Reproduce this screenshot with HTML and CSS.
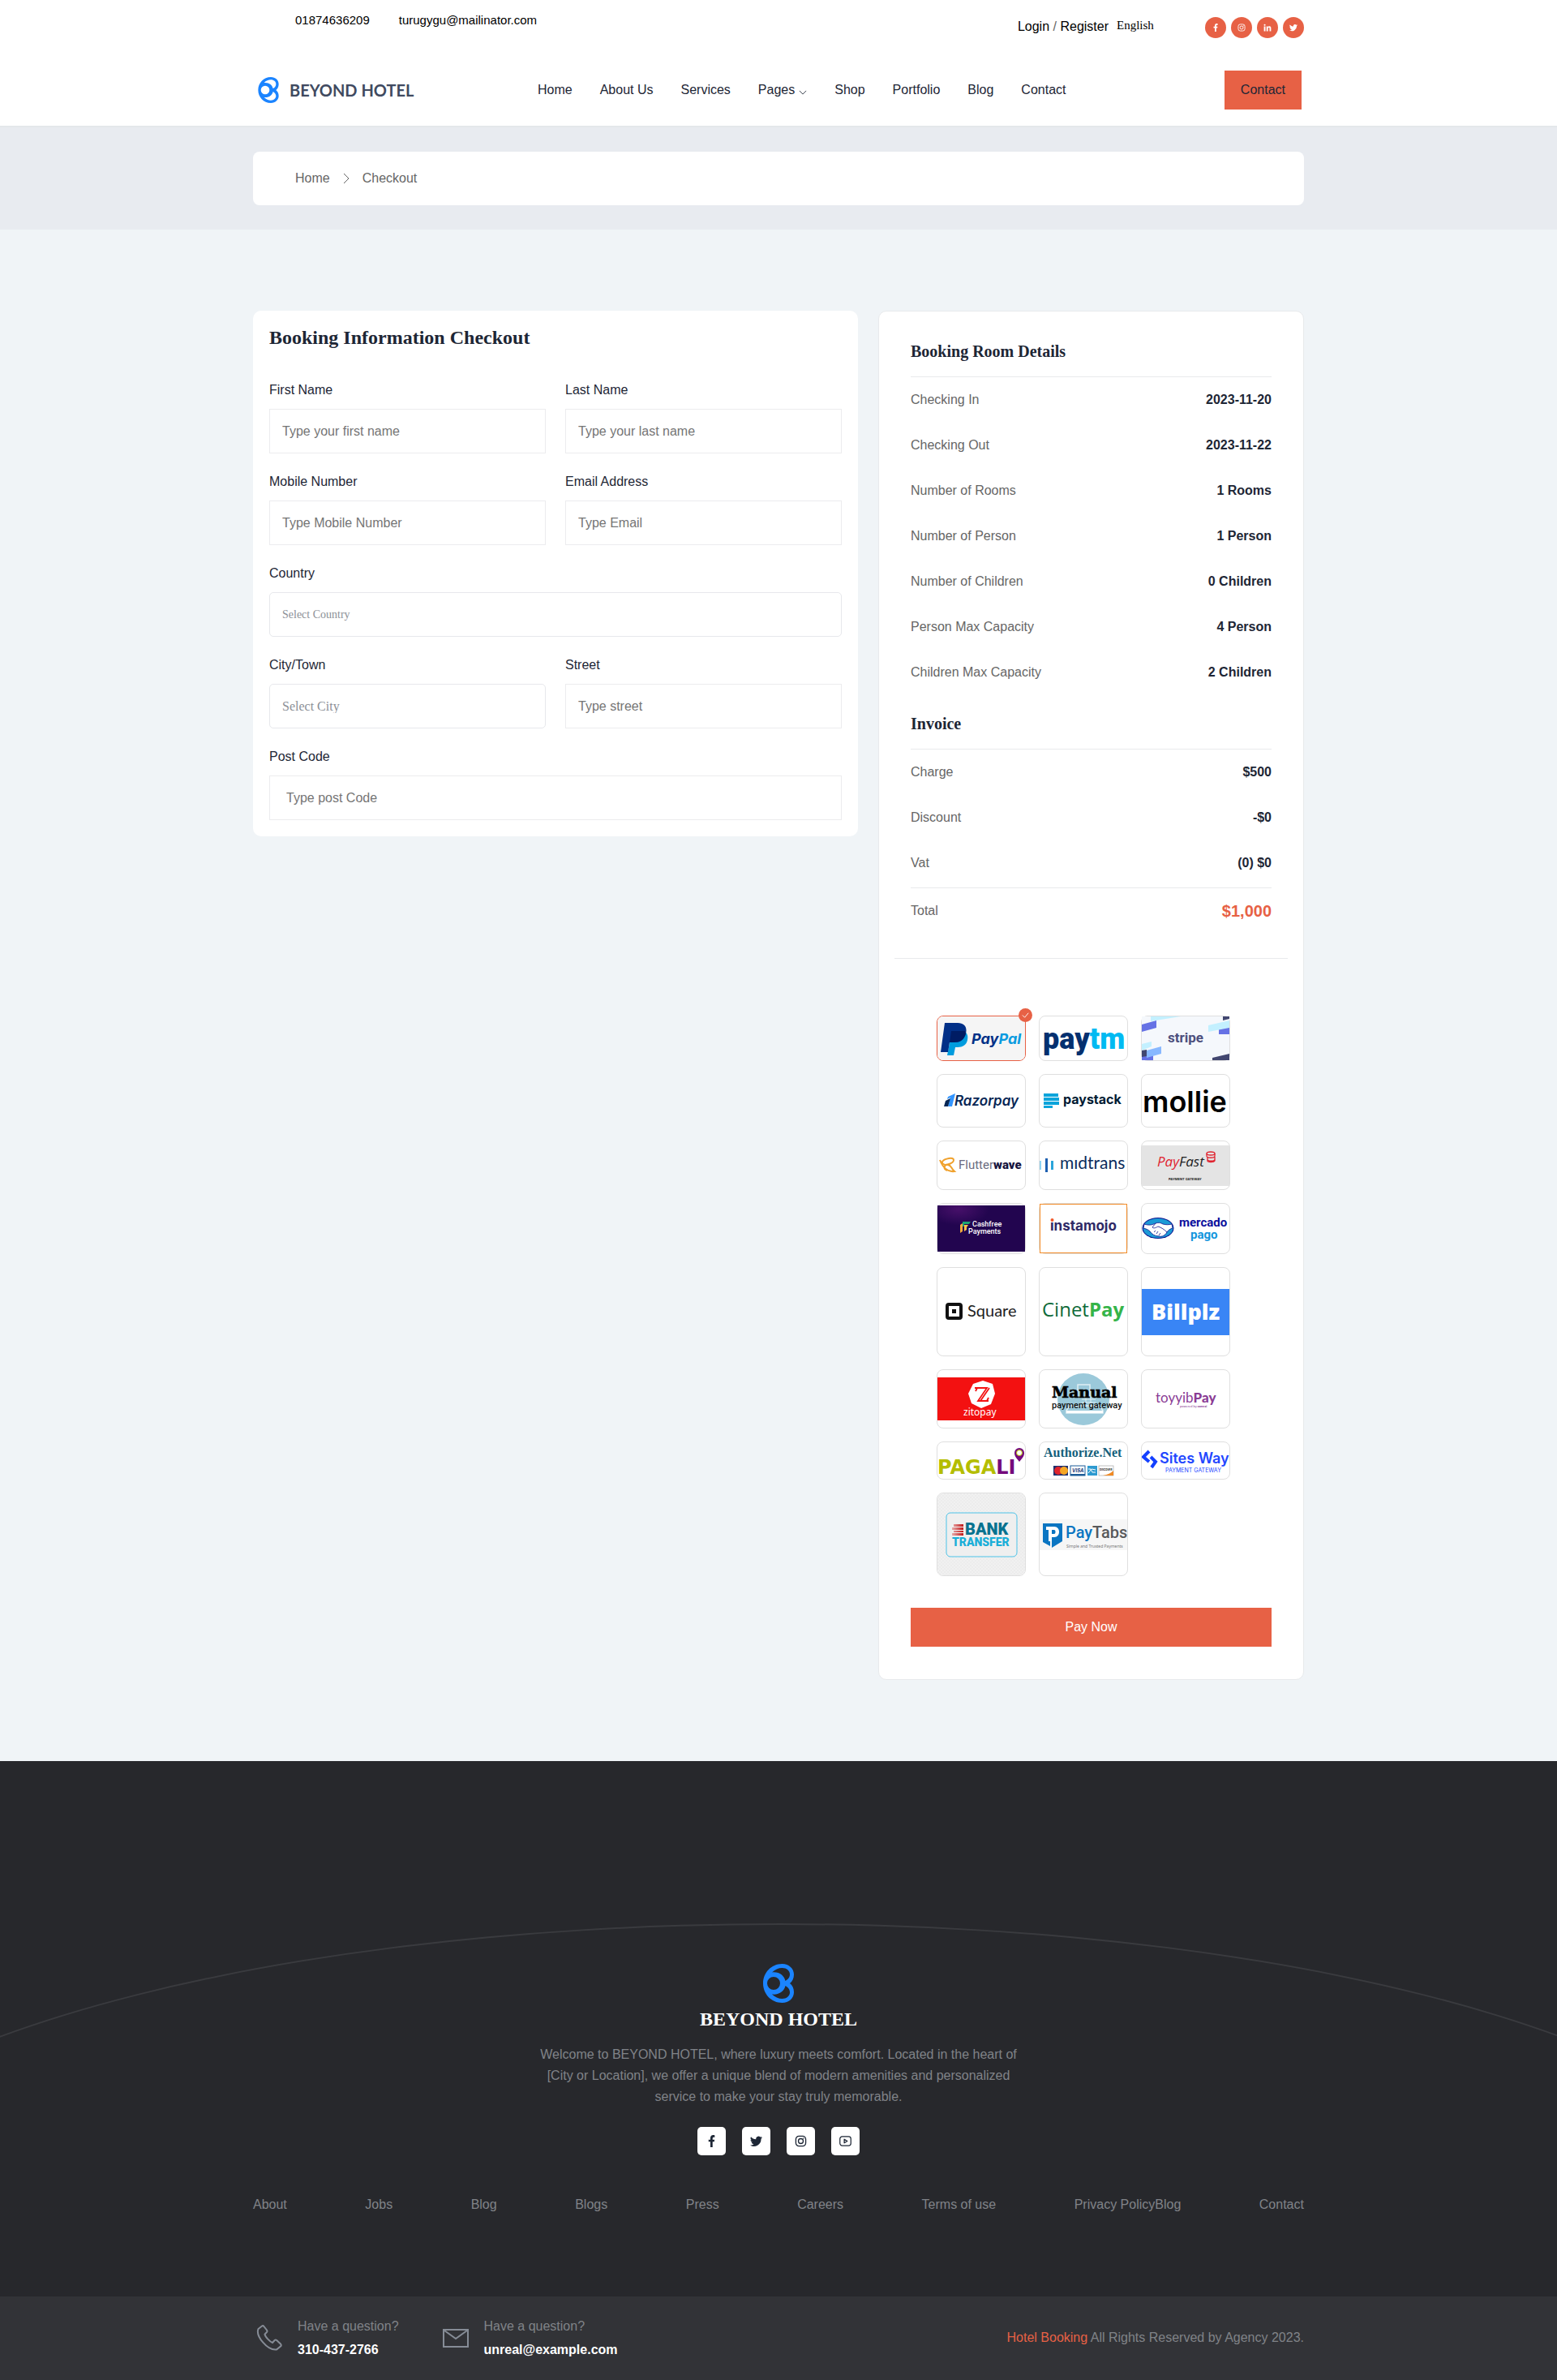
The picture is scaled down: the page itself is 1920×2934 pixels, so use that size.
FILE: index.html
```html
<!DOCTYPE html>
<html lang="en">
<head>
  <meta charset="UTF-8">
  <meta name="viewport" content="width=device-width, initial-scale=1.0">
  <title>Checkout</title>
  <link rel="stylesheet" href="styles.css">
</head>
<body>
  <!-- shared icons -->
  <svg class="sprite" aria-hidden="true">
    <symbol id="logo" viewBox="0 0 38 48">
      <path fill-rule="evenodd" d="M23.500 0C32 0 38 6 38 13C38 18 36 21.500 33 24C36 26.500 38 30 38 35C38 42 32 48 23.500 48C10 48 0 37 0 24C0 11 10 0 23.500 0ZM13 16a8 8 0 1 0 0 16a8 8 0 1 0 0-16ZM11 10.500C14.500 7 19 5 23.500 5C29 5 33 8.500 33 13C33 16.500 30.500 19.500 27.500 21C26 14.500 20 9.500 11 10.500ZM11 37.500C14.500 41 19 43 23.500 43C29 43 33 39.500 33 35C33 31.500 30.500 28.500 27.500 27C26 33.500 20 38.500 11 37.500Z"/>
    </symbol>
    <symbol id="facebook" viewBox="0 0 16 16">
      <path d="M9.300 16V8.800h2.200l.4-2.700H9.300V4.600c0-.9.400-1.600 1.600-1.600h1.200V.400C11.600.200 11 0 10.200 0 7.700 0 6.400 1.500 6.400 4v2.100H4v2.700h2.400V16z"/>
    </symbol>
    <symbol id="twitter" viewBox="0 0 16 16">
      <path d="M16 3.200c-.6.300-1.200.4-1.900.5.700-.4 1.200-1 1.400-1.800-.6.400-1.300.6-2.100.8a3.300 3.300 0 0 0-5.600 3C5.100 5.600 2.700 4.300 1.100 2.400a3.300 3.300 0 0 0 1 4.400c-.5 0-1-.2-1.500-.4 0 1.600 1.100 2.900 2.600 3.200-.5.100-1 .1-1.500.1.400 1.300 1.600 2.200 3.100 2.300A6.600 6.600 0 0 1 0 13.300 9.300 9.300 0 0 0 14.400 5c.6-.5 1.200-1.100 1.600-1.800z"/>
    </symbol>
    <symbol id="instagram" viewBox="0 0 16 16">
      <g fill="none" stroke="currentColor" stroke-width="1.400">
        <rect x="1.500" y="1.500" width="13" height="13" rx="4"/>
        <circle cx="8" cy="8" r="3.200"/>
      </g>
      <circle cx="11.700" cy="4.300" r=".8"/>
    </symbol>
    <symbol id="linkedin" viewBox="0 0 16 16">
      <path d="M1 5.500h3V15H1zM2.500 1a1.700 1.700 0 1 1 0 3.400 1.700 1.700 0 0 1 0-3.400zM6 5.500h2.900v1.300c.5-.9 1.500-1.500 2.800-1.500 2.600 0 3.300 1.600 3.300 4V15h-3v-5c0-1.200-.2-2.200-1.400-2.200S9 8.700 9 10v5H6z"/>
    </symbol>
    <symbol id="youtube" viewBox="0 0 16 16">
      <g fill="none" stroke="currentColor" stroke-width="1.300" stroke-linejoin="round">
        <rect x=".8" y="2" width="14.400" height="12" rx="3"/>
        <path d="M6.500 5.500v5L10.500 8z"/>
      </g>
    </symbol>
  </svg>

  <header class="header">
    <div class="container topbar">
      <div class="topbar-left">
        <a href="#">01874636209</a>
        <a href="#">turugygu@mailinator.com</a>
      </div>
      <div class="topbar-right">
        <div class="login"><a href="#">Login</a> / <a href="#">Register</a></div>
        <select class="language" aria-label="Language">
          <option>English</option>
        </select>
        <div class="social">
          <a href="#" aria-label="Facebook"><svg><use href="#facebook"/></svg></a>
          <a href="#" aria-label="Instagram"><svg><use href="#instagram"/></svg></a>
          <a href="#" aria-label="LinkedIn"><svg><use href="#linkedin"/></svg></a>
          <a href="#" aria-label="Twitter"><svg><use href="#twitter"/></svg></a>
        </div>
      </div>
    </div>
    <div class="container navbar">
      <a href="#" class="logo"><svg><use href="#logo"/></svg><span>BEYOND HOTEL</span></a>
      <nav class="menu">
        <a href="#">Home</a>
        <a href="#">About Us</a>
        <a href="#">Services</a>
        <a href="#">Pages <svg viewBox="0 0 12 8"><path d="M1 1.500l5 5 5-5"/></svg></a>
        <a href="#">Shop</a>
        <a href="#">Portfolio</a>
        <a href="#">Blog</a>
        <a href="#">Contact</a>
      </nav>
      <a href="#" class="btn btn-contact">Contact</a>
    </div>
  </header>

  <div class="breadcrumb-area">
    <div class="container">
      <div class="breadcrumb">
        <a href="#">Home</a>
        <svg viewBox="0 0 8 14"><path d="M1 1l6 6-6 6"/></svg>
        <span>Checkout</span>
      </div>
    </div>
  </div>

  <main class="container checkout">
    <form class="card booking-form" id="booking">
      <h1>Booking Information Checkout</h1>
      <div class="fields">
        <div class="field">
          <label for="first-name">First Name</label>
          <input type="text" id="first-name" placeholder="Type your first name">
        </div>
        <div class="field">
          <label for="last-name">Last Name</label>
          <input type="text" id="last-name" placeholder="Type your last name">
        </div>
        <div class="field">
          <label for="mobile">Mobile Number</label>
          <input type="tel" id="mobile" placeholder="Type Mobile Number">
        </div>
        <div class="field">
          <label for="email">Email Address</label>
          <input type="email" id="email" placeholder="Type Email">
        </div>
        <div class="field full">
          <label for="country">Country</label>
          <select id="country" class="small"><option>Select Country</option></select>
        </div>
        <div class="field">
          <label for="city">City/Town</label>
          <select id="city"><option>Select City</option></select>
        </div>
        <div class="field">
          <label for="street">Street</label>
          <input type="text" id="street" placeholder="Type street">
        </div>
        <div class="field full">
          <label for="post-code">Post Code</label>
          <input type="text" id="post-code" class="post-code" placeholder="Type post Code">
        </div>
      </div>
    </form>

    <aside class="card summary">
      <div class="details">
        <h2>Booking Room Details</h2>
        <table>
          <tr><th scope="row">Checking In</th><td>2023-11-20</td></tr>
          <tr><th scope="row">Checking Out</th><td>2023-11-22</td></tr>
          <tr><th scope="row">Number of Rooms</th><td>1 Rooms</td></tr>
          <tr><th scope="row">Number of Person</th><td>1 Person</td></tr>
          <tr><th scope="row">Number of Children</th><td>0 Children</td></tr>
          <tr><th scope="row">Person Max Capacity</th><td>4 Person</td></tr>
          <tr><th scope="row">Children Max Capacity</th><td>2 Children</td></tr>
        </table>
        <h2 class="invoice-title">Invoice</h2>
        <table>
          <tr><th scope="row">Charge</th><td>$500</td></tr>
          <tr><th scope="row">Discount</th><td>-$0</td></tr>
          <tr><th scope="row">Vat</th><td>(0) $0</td></tr>
        </table>
        <table class="total">
          <tr><th scope="row">Total</th><td>$1,000</td></tr>
        </table>
      </div>

      <div class="payment">
        <div class="gateways">
          <label class="gateway">
            <input type="radio" name="gateway" form="booking" checked aria-label="PayPal">
            <svg viewBox="0 0 108 54">
              <rect width="108" height="54" rx="7" fill="#f5f5f5"/>
              <path d="M18 18h14c5 2 6 6 5 11-1 6-6 9-12 9h-3l-2 10h-8z" fill="#009cde"/>
              <path d="M9 8h16c8 0 12 5 10 13-2 8-7 11-15 11h-5l-2 12H4z" fill="#012f87"/>
              <path d="M17 18h17l1 3c-2 8-7 11-15 11h-5z" fill="#001c64"/>
              <text x="42" y="34" font-family="Inter" font-size="18" font-weight="700" font-style="italic" fill="#003087">Pay<tspan fill="#0a9be0">Pal</tspan></text>
            </svg>
            <span class="check"><svg viewBox="0 0 12 12"><path d="M2 6l3 3 5-6"/></svg></span>
          </label>
          <label class="gateway">
            <input type="radio" name="gateway" form="booking" aria-label="Paytm">
            <svg viewBox="0 0 108 54">
              <text x="4" y="40" font-family="Roboto" font-size="36" font-weight="900" fill="#04306f">pay<tspan fill="#00baf2">tm</tspan></text>
            </svg>
          </label>
          <label class="gateway">
            <input type="radio" name="gateway" form="booking" aria-label="Stripe">
            <svg viewBox="0 0 108 54">
              <rect width="108" height="54" fill="#f5f8fc"/>
              <path d="M0 10l18-5v9L0 19zM95 16l13-3v9H95zM0 49l14-1v6H0z" fill="#6672e5"/>
              <path d="M11 2V0h37L11 6zM82 11l26-6v9l-26 5zM0 34l12-3v6L0 42z" fill="#c3f0ff"/>
              <path d="M6 42l18-5v9L6 51z" fill="#88b8ff"/>
              <path d="M100 0h8v3l-8 2zM87 51l21-5v8H87zM0 42l6-1v8l-6 1z" fill="#424770"/>
              <text x="32" y="32" font-family="Roboto" font-size="17" font-weight="700" fill="#4c4f7d">stripe</text>
            </svg>
          </label>

          <label class="gateway">
            <input type="radio" name="gateway" form="booking" aria-label="Razorpay">
            <svg viewBox="0 0 108 64">
              <path d="M13 27l9-4-4 16h-5l3-11-4 2z" fill="#3395ff"/>
              <path d="M10 32l6-3-3 10H8z" fill="#072654"/>
              <text x="21" y="38" font-family="Inter" font-size="17" font-weight="600" font-style="italic" fill="#072654">Razorpay</text>
            </svg>
          </label>
          <label class="gateway">
            <input type="radio" name="gateway" form="booking" aria-label="Paystack">
            <svg viewBox="0 0 108 64">
              <path d="M5 23h18v4H5zM5 28h19v4H5zM5 33h19v4H5zM5 38h11v3H5z" fill="#0ba4db"/>
              <text x="29" y="36" font-family="Inter" font-size="16" font-weight="700" fill="#011b33">paystack</text>
            </svg>
          </label>
          <label class="gateway">
            <input type="radio" name="gateway" form="booking" aria-label="Mollie">
            <svg viewBox="0 0 108 64">
              <text x="1" y="46" font-family="Inter" font-size="36" font-weight="600" fill="#000">mollie</text>
            </svg>
          </label>

          <label class="gateway">
            <input type="radio" name="gateway" form="booking" aria-label="Flutterwave">
            <svg viewBox="0 0 108 59">
              <g fill="none" stroke="#f0a12c" stroke-width="2">
                <path d="M3 23c4 10 10 15 18 14-5-4-3-7-8-8-4-1-7 5-1 7"/>
                <path d="M6 25c3-4 14-6 14-2s-8 6-10 6-5-2-4-4z"/>
              </g>
              <text x="26" y="34" font-family="Roboto" font-size="15" fill="#6c6c80">Flutter<tspan font-weight="900" fill="#17153f">wave</tspan></text>
            </svg>
          </label>
          <label class="gateway">
            <input type="radio" name="gateway" form="booking" aria-label="Midtrans">
            <svg viewBox="0 0 108 59">
              <path d="M0 24h2v11H0z" fill="#8fd4f2"/>
              <path d="M7 21h3v17H7z" fill="#1d5fb0"/>
              <path d="M14 24h3v11h-3z" fill="#2aa5da"/>
              <text x="25" y="34" font-family="Lato" font-size="21" fill="#0c2d5c">mıdtrans</text>
            </svg>
          </label>
          <label class="gateway">
            <input type="radio" name="gateway" form="booking" aria-label="PayFast">
            <svg viewBox="0 0 108 59">
              <rect y="5" width="108" height="50" fill="#e4e4e4"/>
              <text x="19" y="31" font-family="Open Sans" font-size="17" font-style="italic" fill="#e02430">Pay<tspan fill="#222">Fast</tspan></text>
              <g fill="none" stroke="#e02430" stroke-width="1.300">
                <ellipse cx="85" cy="15" rx="5" ry="2"/>
                <path d="M80 15v3c0 3 10 3 10 0v-3M81 19v3c0 3 9 3 9 0v-3M81 22v2c0 2 8 2 9 0v-2"/>
              </g>
              <text x="33" y="48" font-family="Inter" font-size="4" font-weight="700" fill="#222">PAYMENT GATEWAY</text>
            </svg>
          </label>

          <label class="gateway">
            <input type="radio" name="gateway" form="booking" aria-label="Cashfree Payments">
            <svg viewBox="0 0 108 61">
              <defs>
                <radialGradient id="glow" cx=".24" cy=".08" r=".35">
                  <stop offset="0" stop-color="#47106a"/>
                  <stop offset="1" stop-color="#22054f"/>
                </radialGradient>
              </defs>
              <rect y="2" width="108" height="57" fill="url(#glow)"/>
              <path d="M28 26l3-2v10l-3 2z" fill="#f3a93c"/>
              <path d="M31 22h10l-2 3h-6v3h-2z" fill="#1ba672"/>
              <path d="M33 26h5l-2 3v3l-3 2z" fill="#f6c14b"/>
              <g font-family="Roboto" font-size="9" font-weight="500" fill="#fff">
                <text x="43" y="28">Cashfree</text>
                <text x="38" y="37">Payments</text>
              </g>
            </svg>
          </label>
          <label class="gateway">
            <input type="radio" name="gateway" form="booking" aria-label="Instamojo">
            <svg viewBox="0 0 108 61">
              <rect x=".5" y=".5" width="107" height="60" fill="#fff" stroke="#f28c28"/>
              <text x="13" y="33" font-family="Inter" font-size="17" font-weight="700" fill="#2f2a66">ınstamojo</text>
              <circle cx="15.500" cy="20" r="2" fill="#f1592a"/>
            </svg>
          </label>
          <label class="gateway">
            <input type="radio" name="gateway" form="booking" aria-label="Mercado Pago">
            <svg viewBox="0 0 108 61">
              <ellipse cx="20" cy="30" rx="19.500" ry="13" fill="#0a0f8c"/>
              <ellipse cx="20" cy="30" rx="18.500" ry="12" fill="#1c9ad6"/>
              <path d="M3 25c6 2 10 1 14-1 3-1 6-1 9 1 4 1 7 1 11 0l1 5c-3 1-5 2-7 5-2 4-6 6-10 5-5 0-9-3-11-6-2-2-4-3-8-4z" fill="#fff" stroke="#0a0f8c" stroke-width=".8"/>
              <path d="M17 24l-4 5c2 2 5 0 7-1 4 1 8 4 11 7M15 35l2-2M18 37l2-3M21 39l2-3" fill="none" stroke="#0a0f8c" stroke-width=".8"/>
              <g font-family="Roboto" font-size="15" font-weight="700">
                <text x="46" y="28" fill="#0a0f9c">mercado</text>
                <text x="60" y="43" fill="#1295dd">pago</text>
              </g>
            </svg>
          </label>

          <label class="gateway">
            <input type="radio" name="gateway" form="booking" aria-label="Square">
            <svg viewBox="0 0 108 108">
              <rect x="12" y="45" width="17" height="17" rx="2" fill="none" stroke="#111" stroke-width="4"/>
              <rect x="18" y="51" width="5" height="5" fill="#111"/>
              <text x="37" y="60" font-family="Lato" font-size="20" fill="#222">Square</text>
            </svg>
          </label>
          <label class="gateway">
            <input type="radio" name="gateway" form="booking" aria-label="CinetPay">
            <svg viewBox="0 0 108 108">
              <text x="3" y="60" font-family="Open Sans" font-size="24" fill="#0f6b3a">Cinet<tspan font-weight="700" fill="#35b449">Pay</tspan></text>
            </svg>
          </label>
          <label class="gateway">
            <input type="radio" name="gateway" form="booking" aria-label="Billplz">
            <svg viewBox="0 0 108 108">
              <rect y="26" width="108" height="57" fill="#3985f5"/>
              <text x="12" y="64" font-family="Open Sans" font-size="27" font-weight="800" fill="#fff">Billplz</text>
            </svg>
          </label>

          <label class="gateway">
            <input type="radio" name="gateway" form="booking" aria-label="Zitopay">
            <svg viewBox="0 0 108 71">
              <rect y="9" width="108" height="53" fill="#f31111"/>
              <path d="M56 13l12 4 3 12-5 13-12 5-12-6-4-12 6-12z" fill="#fff"/>
              <path d="M46 22h15L50 38h13M49 22l-2 4M64 22L53 38M61 38l2-4" fill="none" stroke="#f31111" stroke-width="1.800"/>
              <text x="32" y="56" font-family="Noto Sans" font-size="12" fill="#fff">zitopay</text>
            </svg>
          </label>
          <label class="gateway">
            <input type="radio" name="gateway" form="booking" aria-label="Manual payment gateway">
            <svg viewBox="0 0 108 71">
              <circle cx="54" cy="36" r="32" fill="#9bc9da"/>
              <path d="M47 18h15v15H47zM37 44h37l4 6v3H33v-3z" fill="#9bc9da" stroke="#dfeef4" stroke-width="1.500"/>
              <path d="M52 36h17M52 40h17M57 33v10M63 33v10" stroke="#dfeef4"/>
              <path d="M33 50h45v3H33z" fill="#fff"/>
              <text x="15" y="34" font-family="DejaVu Serif" font-size="19" font-weight="700" fill="#000" stroke="#000" stroke-width=".6">Manual</text>
              <text x="15" y="47" font-family="Roboto" font-size="11" font-weight="500" fill="#111">payment gateway</text>
            </svg>
          </label>
          <label class="gateway">
            <input type="radio" name="gateway" form="booking" aria-label="toyyibPay">
            <svg viewBox="0 0 108 71">
              <text x="17" y="40" font-family="Lato" font-size="17" fill="#8a3c95">toyyib<tspan font-weight="900">Pay</tspan></text>
              <text x="47" y="46" font-family="Lato" font-size="4" fill="#8a3c95">powered by <tspan font-weight="900">convai</tspan></text>
            </svg>
          </label>

          <label class="gateway">
            <input type="radio" name="gateway" form="booking" aria-label="Pagali">
            <svg viewBox="0 0 108 45">
              <text x="0" y="39" font-family="DejaVu Sans" font-size="24" font-weight="700" fill="#b4bd00">PAGA<tspan fill="#740a7c">LI</tspan></text>
              <path d="M101 24c-4-5-6-7-6-11a6 6 0 0 1 12 0c0 4-2 6-6 11z" fill="#740a7c"/>
              <circle cx="101" cy="13" r="3.500" fill="#fff" stroke="#b4bd00"/>
            </svg>
          </label>
          <label class="gateway">
            <input type="radio" name="gateway" form="booking" aria-label="Authorize.Net">
            <svg viewBox="0 0 108 45">
              <text x="5" y="18" font-family="Liberation Serif" font-size="16" font-weight="700" fill="#155f7b">Authorize.Net</text>
              <rect x="17" y="29" width="18" height="12" fill="#20306e"/>
              <circle cx="23" cy="35" r="5" fill="#e0242c"/>
              <circle cx="30" cy="35" r="5" fill="#f5a623"/>
              <rect x="38" y="29" width="18" height="12" fill="#fff" stroke="#1d5c98"/>
              <path d="M38 39h18v2H38z" fill="#1d5c98"/>
              <text x="40" y="37" font-family="Inter" font-size="6" font-weight="700" font-style="italic" fill="#1a3a78">VISA</text>
              <rect x="59" y="29" width="12" height="12" fill="#2e9ad0"/>
              <path d="M60 33h3l2 4h4M60 38l4-5 5 1" fill="none" stroke="#fff"/>
              <rect x="73" y="29" width="18" height="12" fill="#fff" stroke="#999" stroke-width=".6"/>
              <path d="M78 41c6-1 10-3 13-6v6z" fill="#f08a24"/>
              <text x="74" y="35" font-family="Inter" font-size="3" font-weight="700" fill="#222">DISCOVER</text>
            </svg>
          </label>
          <label class="gateway">
            <input type="radio" name="gateway" form="booking" aria-label="Sites Way">
            <svg viewBox="0 0 108 45">
              <path d="M9 11l-7 7 7 6M11 18l6 6-5 7" fill="none" stroke="#1440ff" stroke-width="4"/>
              <text x="22" y="26" font-family="Inter" font-size="18" font-weight="600" fill="#2347ff">Sites Way</text>
              <text x="29" y="37" font-family="Inter" font-size="7" fill="#2347ff">PAYMENT GATEWAY</text>
            </svg>
          </label>

          <label class="gateway">
            <input type="radio" name="gateway" form="booking" aria-label="Bank Transfer">
            <svg viewBox="0 0 108 101">
              <defs>
                <pattern id="checker" width="4" height="4" patternUnits="userSpaceOnUse">
                  <path d="M0 0h4v4H0z" fill="#f1f1f1"/>
                  <path d="M0 0h2v2H0zM2 2h2v2H2z" fill="#ececec"/>
                </pattern>
                <linearGradient id="bars">
                  <stop offset="0" stop-color="#e8a8a8"/>
                  <stop offset="1" stop-color="#c01818"/>
                </linearGradient>
              </defs>
              <rect width="108" height="101" rx="7" fill="url(#checker)"/>
              <rect x="11" y="24" width="87" height="54" rx="5" fill="#efefef" stroke="#4cc3e8"/>
              <path d="M20 38h12v3H20zM18 42h14v3H18zM20 46h12v2H20zM18 49h14v3H18z" fill="url(#bars)"/>
              <text x="34" y="51" font-family="Roboto" font-size="20" font-weight="900" fill="#08728f">BANK</text>
              <text x="18" y="65" font-family="Roboto" font-size="14" font-weight="900" fill="#1aaed8">TRANSFER</text>
            </svg>
          </label>
          <label class="gateway">
            <input type="radio" name="gateway" form="booking" aria-label="PayTabs">
            <svg viewBox="0 0 108 101">
              <rect y="32" width="108" height="38" fill="#f6f6f6"/>
              <path d="M4 37h24v22l-13 8V57l-2 1v7l-9-5z" fill="#0a75c2"/>
              <path d="M8 41h10c8 0 8 13 0 13h-3v5h-4V45H8zM15 45v5h3c2 0 2-5 0-5z" fill="#fff" fill-rule="evenodd"/>
              <text x="32" y="55" font-family="Roboto" font-size="20" font-weight="500" fill="#0a75c2">Pay<tspan fill="#58595b">Tabs</tspan></text>
              <text x="33" y="67" font-family="Noto Sans" font-size="5" fill="#777">Simple and Trusted Payments</text>
            </svg>
          </label>
        </div>
        <button type="submit" form="booking" class="btn btn-pay">Pay Now</button>
      </div>
    </aside>
  </main>

  <footer class="footer">
    <div class="footer-top">
      <div class="container">
        <svg class="footer-logo"><use href="#logo"/></svg>
        <h3>BEYOND HOTEL</h3>
        <p>Welcome to BEYOND HOTEL, where luxury meets comfort. Located in the heart of [City or Location], we offer a unique blend of modern amenities and personalized service to make your stay truly memorable.</p>
        <div class="footer-social">
          <a href="#" aria-label="Facebook"><svg><use href="#facebook"/></svg></a>
          <a href="#" aria-label="Twitter"><svg><use href="#twitter"/></svg></a>
          <a href="#" aria-label="Instagram"><svg><use href="#instagram"/></svg></a>
          <a href="#" aria-label="YouTube"><svg><use href="#youtube"/></svg></a>
        </div>
        <ul class="footer-links">
          <li><a href="#">About</a></li>
          <li><a href="#">Jobs</a></li>
          <li><a href="#">Blog</a></li>
          <li><a href="#">Blogs</a></li>
          <li><a href="#">Press</a></li>
          <li><a href="#">Careers</a></li>
          <li><a href="#">Terms of use</a></li>
          <li><a href="#">Privacy Policy</a><a href="#">Blog</a></li>
          <li><a href="#">Contact</a></li>
        </ul>
      </div>
    </div>
    <div class="footer-bottom">
      <div class="container">
        <div class="contact-item">
          <svg viewBox="0 0 32 32"><path d="M7 1.500L2.500 5C-1 14 14 32 25 30.500l5.500-4.500c.5-1 .3-1.500-.3-2.200l-5-4.800c-1-.8-1.800-.7-2.500 0L20 22c-3-1-9-7-9.500-10.500L13 9c.7-.8.700-1.500 0-2.500L9.500 2C8.700 1 8 .8 7 1.500z"/></svg>
          <div>
            <span>Have a question?</span>
            <a href="#">310-437-2766</a>
          </div>
        </div>
        <div class="contact-item">
          <svg viewBox="0 0 32 32"><path d="M1 6h30v21H1zM2 7l14 10L30 7"/></svg>
          <div>
            <span>Have a question?</span>
            <a href="#">unreal@example.com</a>
          </div>
        </div>
        <div class="copyright"><a href="#">Hotel Booking</a> All Rights Reserved by Agency 2023.</div>
      </div>
    </div>
  </footer>
</body>
</html>
```
FILE: styles.css
```css
* {
  margin: 0;
  padding: 0;
  box-sizing: border-box;
}

body {
  background-color: #f0f4f7;
  color: #666;
  font-family: "Liberation Sans", Arial, sans-serif;
  font-size: 16px;
  line-height: 24px;
}

a {
  color: inherit;
  text-decoration: none;
}

ul {
  list-style: none;
}

svg {
  display: block;
  fill: currentColor;
}

.sprite {
  position: absolute;
  width: 0;
  height: 0;
}

.container {
  width: 100%;
  max-width: 1296px;
  margin: 0 auto;
}

.btn {
  display: block;
  border: 0;
  background-color: #e76145;
  font-family: inherit;
  font-size: 16px;
  line-height: 48px;
  text-align: center;
  cursor: pointer;
}

/* header */
.header {
  background-color: #fff;
  border-bottom: 2px solid #e4e7ea;
}

.topbar {
  display: flex;
  justify-content: space-between;
  padding: 16px 0 20px 52px;
  color: #000;
}

.topbar-left {
  display: flex;
  gap: 36px;
  font-size: 15px;
  line-height: 18px;
}

.topbar-right {
  display: flex;
  gap: 10px;
  padding-top: 5px;
}

.login {
  color: #666;
}

.login a {
  color: #000;
}

.language {
  appearance: none;
  width: 99px;
  height: 20px;
  border: 0;
  background: none;
  color: #000;
  font-family: "Liberation Serif", serif;
  font-size: 15px;
}

.social {
  display: flex;
  gap: 6px;
}

.social a {
  display: flex;
  align-items: center;
  justify-content: center;
  width: 26px;
  height: 26px;
  border-radius: 50%;
  background-color: #e76145;
  color: #fff;
}

.social svg {
  width: 10px;
  height: 10px;
}

.navbar {
  display: flex;
  align-items: center;
  padding: 20px 3px 20px 6px;
}

.logo {
  display: flex;
  flex: 0 0 345px;
  align-items: center;
  gap: 13px;
  color: #404a60;
  font-family: Lato, sans-serif;
  font-size: 20px;
  font-weight: 700;
}

.logo svg {
  width: 26px;
  height: 32px;
  color: #1b84ff;
}

.menu {
  display: flex;
  gap: 34px;
  color: #1d2635;
}

.menu a {
  display: flex;
  align-items: center;
  gap: 5px;
}

.menu svg {
  width: 10px;
  height: 8px;
  margin-top: 5px;
  fill: none;
  stroke: currentColor;
}

.btn-contact {
  margin-left: auto;
  padding: 0 20px;
  color: #1d2635;
}

/* breadcrumb */
.breadcrumb-area {
  padding: 30px 0;
  background-color: #e8ebf0;
}

.breadcrumb {
  display: flex;
  align-items: center;
  gap: 16px;
  padding: 21px 52px;
  border-radius: 8px;
  background-color: #fff;
}

.breadcrumb svg {
  width: 8px;
  height: 14px;
  fill: none;
  stroke: currentColor;
}

/* checkout */
.checkout {
  display: grid;
  grid-template-columns: 746fr 525fr;
  align-items: start;
  gap: 25px;
  padding: 100px 0;
}

.card {
  border-radius: 10px;
  background-color: #fff;
}

.booking-form {
  padding: 20px;
}

h1, h2, h3 {
  color: #1d2635;
  font-family: "Liberation Serif", serif;
}

h1 {
  margin-bottom: 40px;
  font-size: 24px;
  line-height: 26px;
}

.fields {
  display: grid;
  grid-template-columns: 1fr 1fr;
  gap: 23px 24px;
}

.full {
  grid-column: span 2;
}

.field label {
  display: block;
  margin-bottom: 11px;
  color: #1d2635;
}

.field input,
.field select {
  display: block;
  width: 100%;
  height: 55px;
  padding: 0 15px;
  border: 1px solid #ececee;
  background-color: #fff;
  font-family: inherit;
  font-size: 16px;
}

.field .post-code {
  padding: 0 20px;
}

.field select {
  appearance: none;
  border-color: #e7e8ec;
  border-radius: 5px;
  color: #8c9097;
  font-family: "Liberation Serif", serif;
}

.field .small {
  font-size: 14px;
}

::placeholder {
  color: #757575;
}

/* summary */
.summary {
  padding: 34px 19px 40px;
  border: 1px solid #e8eaec;
}

.details {
  padding: 0 20px 30px;
}

h2 {
  padding-bottom: 16px;
  border-bottom: 1px solid #e8eaec;
  font-size: 20px;
  line-height: 30px;
}

.invoice-title {
  margin-top: 20px;
}

table {
  width: 100%;
  border-collapse: collapse;
}

th {
  height: 56px;
  font-weight: 400;
  text-align: left;
}

td {
  color: #1d2635;
  font-weight: 700;
  text-align: right;
}

.total {
  margin-top: 2px;
  border-top: 1px solid #e8eaec;
}

.total td {
  color: #e76145;
  font-size: 20px;
}

.payment {
  padding: 70px 20px 0;
  border-top: 1px solid #e8eaec;
}

.gateways {
  display: grid;
  grid-template-columns: repeat(3, 110px);
  gap: 16px;
  margin: 0 0 39px 32px;
}

.gateway {
  position: relative;
  border: 1px solid #dfdfdf;
  border-radius: 8px;
  cursor: pointer;
}

.gateway input {
  position: absolute;
  opacity: 0;
}

.gateway:has(:checked) {
  border-color: #e76145;
}

.check {
  position: absolute;
  top: -10px;
  right: -9px;
  display: flex;
  align-items: center;
  justify-content: center;
  width: 17px;
  height: 17px;
  border-radius: 50%;
  background-color: #e76145;
}

.check svg {
  width: 11px;
  height: 11px;
  fill: none;
  stroke: #fff;
}

.btn-pay {
  width: 100%;
  color: #fff;
}

/* footer */
.footer {
  background-color: #27282c;
  color: #808388;
}

.footer-top {
  position: relative;
  overflow: hidden;
  padding: 250px 0 100px;
  line-height: 26px;
  text-align: center;
}

/* curved line behind the footer content */
.footer-top::before {
  content: "";
  position: absolute;
  top: 200px;
  left: -15%;
  width: 130%;
  height: 764px;
  border: 2px solid #3a3b3f;
  border-radius: 50%;
}

.footer-top .container {
  position: relative;
}

.footer-logo {
  width: 38px;
  height: 48px;
  margin: 0 auto 5px;
  color: #1b84ff;
}

h3 {
  margin-bottom: 16px;
  color: #fff;
  font-size: 24px;
  line-height: 30px;
}

.footer-top p {
  max-width: 600px;
  margin: 0 auto 24px;
}

.footer-social {
  display: flex;
  justify-content: center;
  gap: 20px;
  margin-bottom: 48px;
}

.footer-social a {
  display: flex;
  align-items: center;
  justify-content: center;
  width: 35px;
  height: 35px;
  border-radius: 5px;
  background-color: #fff;
  color: #1d2635;
}

.footer-social svg {
  width: 15px;
  height: 15px;
}

.footer-links {
  display: flex;
  justify-content: space-between;
}

.footer-bottom {
  padding: 22px 0 23px;
  background-color: #323337;
}

.footer-bottom .container {
  display: flex;
  align-items: center;
  gap: 50px;
}

.contact-item {
  display: flex;
  align-items: center;
  gap: 19px;
  padding-left: 4px;
  line-height: 29px;
}

.contact-item svg {
  width: 32px;
  height: 32px;
  fill: none;
  stroke: #868c96;
  stroke-width: 2;
}

.contact-item span,
.contact-item a {
  display: block;
}

.contact-item a {
  color: #fff;
  font-weight: 700;
}

.copyright {
  margin-left: auto;
}

.copyright a {
  color: #e76145;
}
```
